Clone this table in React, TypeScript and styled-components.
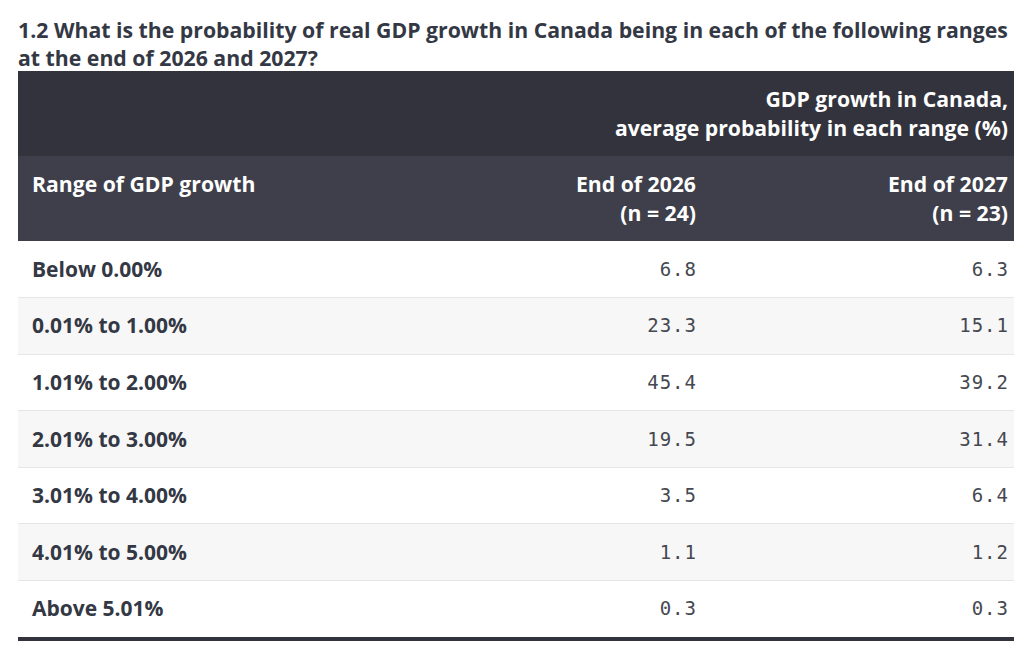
import React from 'react';
import styled, { createGlobalStyle } from 'styled-components';

const GlobalStyle = createGlobalStyle`
  body {
    margin: 0;
    background: #ffffff;
    font-family: "Open Sans", "Noto Sans", sans-serif;
  }
`;

const Page = styled.div`
  padding: 16px 10px 0 18px;
  color: #333844;
`;

const Title = styled.h2`
  margin: 0 -10px 0 0;
  font-size: 21.25px;
  line-height: 27.5px;
  font-weight: 700;
  color: #333844;
`;

const Table = styled.div`
  display: grid;
  grid-template-columns: 1fr 312px 312px;
  border-bottom: 4px solid #32333d;
`;

const GroupRow = styled.div`
  grid-column: 1 / -1;
  display: grid;
  grid-template-columns: 1fr 624px;
  background: #32333d;
`;

const HeadRow = styled.div`
  grid-column: 1 / -1;
  display: grid;
  grid-template-columns: subgrid;
  background: #3e3f4a;
`;

const HeadCell = styled.div<{ $right?: boolean }>`
  padding: 14px 6px 14px 14px;
  font-size: 21.2px;
  line-height: 28.6px;
  font-weight: 700;
  color: #ffffff;
  text-align: ${(p) => (p.$right ? 'right' : 'left')};
  white-space: nowrap;
`;

const BodyRow = styled.div<{ $shade: boolean }>`
  grid-column: 1 / -1;
  display: grid;
  grid-template-columns: subgrid;
  background: ${(p) => (p.$shade ? '#f7f7f7' : '#ffffff')};
  border-top: 1px solid #e6e6e6;
  &:nth-child(3) {
    border-top: none;
  }
`;

const Label = styled.div`
  padding: 13.5px 6px 13.5px 14px;
  font-size: 21px;
  line-height: 28.6px;
  font-weight: 700;
  color: #333844;
`;

const Value = styled.div`
  padding: 13.5px 6px 13.5px 14px;
  font-family: "DejaVu Sans Mono", "Liberation Mono", monospace;
  font-size: 19px;
  line-height: 28.6px;
  letter-spacing: 1px;
  color: #454850;
  text-align: right;
  margin-right: -1px;
`;

const rows: [string, string, string][] = [
  ['Below 0.00%', '6.8', '6.3'],
  ['0.01% to 1.00%', '23.3', '15.1'],
  ['1.01% to 2.00%', '45.4', '39.2'],
  ['2.01% to 3.00%', '19.5', '31.4'],
  ['3.01% to 4.00%', '3.5', '6.4'],
  ['4.01% to 5.00%', '1.1', '1.2'],
  ['Above 5.01%', '0.3', '0.3'],
];

function App() {
  return (
    <Page>
      <GlobalStyle />
      <Title>
        1.2 What is the probability of real GDP growth in Canada being in each of the following ranges
        at the end of 2026 and 2027?
      </Title>
      <Table>
        <GroupRow>
          <div />
          <HeadCell $right>
            GDP growth in Canada,
            <br />
            average probability in each range (%)
          </HeadCell>
        </GroupRow>
        <HeadRow>
          <HeadCell>Range of GDP growth</HeadCell>
          <HeadCell $right>
            End of 2026
            <br />
            (n = 24)
          </HeadCell>
          <HeadCell $right>
            End of 2027
            <br />
            (n = 23)
          </HeadCell>
        </HeadRow>
        {rows.map(([label, a, b], i) => (
          <BodyRow key={label} $shade={i % 2 === 1}>
            <Label>{label}</Label>
            <Value>{a}</Value>
            <Value>{b}</Value>
          </BodyRow>
        ))}
      </Table>
    </Page>
  );
}

export default App;
